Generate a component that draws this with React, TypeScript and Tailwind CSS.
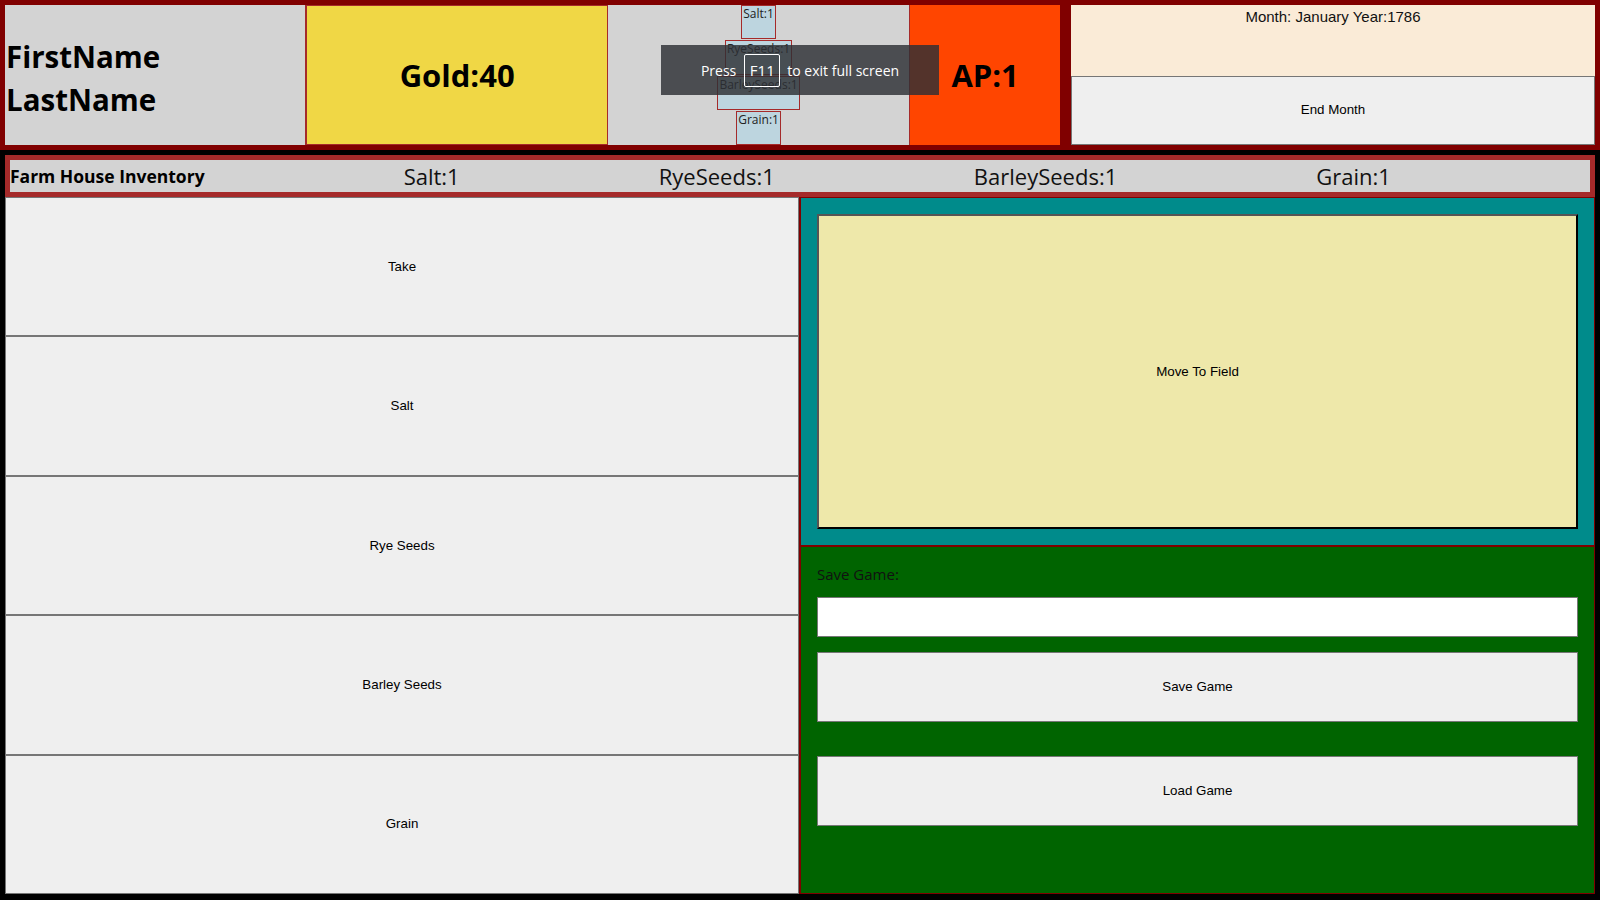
import React from "react";

const seg = { fontFamily: '"Open Sans", "Noto Sans", sans-serif' };
const arial = { fontFamily: '"Liberation Sans", Arial, sans-serif' };

function MiniBox({ label }: { label: string }) {
  return (
    <div className="flex-1 flex justify-center min-h-0">
      <div className="border border-[#a52a2a] bg-[#bdd5df] text-[12px] leading-[16px] text-[#222] px-[1px] text-center" style={seg}>
        {label}
      </div>
    </div>
  );
}

function BigButton({ label, className = "" }: { label: string; className?: string }) {
  return (
    <button
      className={`border border-[#767676] bg-[#efefef] text-[13.33px] text-black flex items-center justify-center min-h-0 ${className}`}
      style={arial}
    >
      {label}
    </button>
  );
}

export default function App() {
  return (
    <div className="w-[1600px] h-[900px] bg-black flex flex-col overflow-hidden relative">
      {/* Header */}
      <div className="h-[150px] bg-[#800000] p-[5px] flex gap-[11px] shrink-0">
        <div className="w-[1055px] grid grid-cols-[2fr_2fr_2fr_1fr]">
          <div className="bg-[#d3d3d3] flex items-center pl-[1px] pt-[5px] border-r border-[#a52a2a]">
            <div className="text-[29.5px] font-bold leading-[43px] text-black" style={seg}>
              FirstName
              <br />
              LastName
            </div>
          </div>
          <div className="bg-[#f0d745] border border-[#a52a2a] flex items-center justify-center pt-[1px]">
            <span className="text-[31px] font-bold text-black" style={seg}>
              Gold:40
            </span>
          </div>
          <div className="bg-[#d3d3d3] flex flex-col gap-[1px]">
            <MiniBox label="Salt:1" />
            <MiniBox label="RyeSeeds:1" />
            <MiniBox label="BarleySeeds:1" />
            <MiniBox label="Grain:1" />
          </div>
          <div className="bg-[#ff4500] border-l border-[#a52a2a] flex items-center justify-center pt-[1px]">
            <span className="text-[31px] font-bold text-black" style={seg}>
              AP:1
            </span>
          </div>
        </div>
        <div className="flex-1 flex flex-col">
          <div className="flex-1 bg-[#faebd7] text-center text-[15px] leading-[18px] pt-[3px] text-[#111]" style={arial}>
            Month: January Year:1786
          </div>
          <BigButton label="End Month" className="flex-1 w-full" />
        </div>
      </div>

      {/* Lower section */}
      <div className="flex-1 flex flex-col px-[5px] pt-[5px] pb-[6px] min-h-0">
        <div className="h-[42px] border-[5px] border-[#a52a2a] bg-[#d3d3d3] flex items-center shrink-0">
          <div className="text-[17.5px] font-bold text-black whitespace-nowrap" style={seg}>
            Farm House Inventory
          </div>
          <div className="flex-1 flex justify-evenly text-[22px] text-[#111]" style={seg}>
            <span>Salt:1</span>
            <span>RyeSeeds:1</span>
            <span>BarleySeeds:1</span>
            <span>Grain:1</span>
          </div>
        </div>
        <div className="flex-1 flex min-h-0">
          <div className="w-[795px] flex flex-col border-r border-[#800000] min-h-0">
            <BigButton label="Take" className="flex-1 w-full" />
            <BigButton label="Salt" className="flex-1 w-full" />
            <BigButton label="Rye Seeds" className="flex-1 w-full" />
            <BigButton label="Barley Seeds" className="flex-1 w-full" />
            <BigButton label="Grain" className="flex-1 w-full" />
          </div>
          <div className="flex-1 flex flex-col min-h-0">
            <div className="h-[349px] shrink-0 bg-[#008b8b] border border-[#800000] p-4 flex">
              <button
                className="flex-1 bg-[#eee8aa] border-2 border-t-[#555] border-l-[#555] border-b-black border-r-black text-[13.33px] text-black flex items-center justify-center"
                style={arial}
              >
                Move To Field
              </button>
            </div>
            <div className="flex-1 min-h-0 bg-[#006400] border border-[#800000] px-4 pt-[15px] flex flex-col">
              <div className="h-6 leading-6 text-[15px] text-[#111]" style={seg}>
                Save Game:
              </div>
              <input className="mt-[11px] h-[40px] shrink-0 bg-white border border-[#767676] outline-none" />
              <BigButton label="Save Game" className="mt-[15px] h-[70px] shrink-0 w-full" />
              <BigButton label="Load Game" className="mt-[34px] h-[70px] shrink-0 w-full" />
            </div>
          </div>
        </div>
      </div>

      {/* Fullscreen overlay */}
      <div
        className="absolute left-[661px] top-[45px] w-[278px] h-[50px] bg-[rgba(45,47,52,0.82)] flex items-center justify-center text-white text-[14px]"
        style={seg}
      >
        <span>Press</span>
        <span className="ml-[8px] mr-[7px] border border-white rounded-[2px] w-[36px] h-[33px] flex items-center justify-center text-[15px]">
          F11
        </span>
        <span>to exit full screen</span>
      </div>
    </div>
  );
}
